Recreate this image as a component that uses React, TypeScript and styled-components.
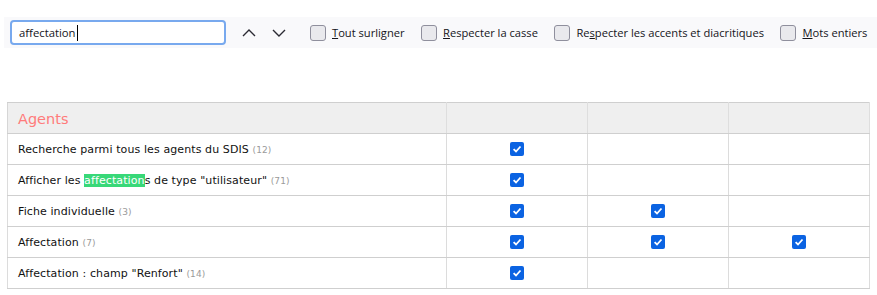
import React from 'react'
import styled, { createGlobalStyle } from 'styled-components'

const GlobalStyle = createGlobalStyle`
  html, body {
    margin: 0;
    padding: 0;
    background: #ffffff;
  }
`

const Page = styled.div`
  width: 877px;
  padding-top: 17px;
`

const FindBar = styled.div`
  display: flex;
  align-items: center;
  height: 31px;
  margin-left: 4px;
  padding-left: 6px;
  background: #f9f9fb;
  font-family: 'Open Sans', 'Noto Sans', sans-serif;
  font-size: 11.15px;
  color: #15141a;
  overflow: hidden;
`

const SearchField = styled.div`
  box-sizing: border-box;
  flex: 0 0 216px;
  height: 25px;
  border: 2px solid #78a9ee;
  border-radius: 4px;
  background: #fff;
  display: flex;
  align-items: center;
  padding-left: 7px;
  font-size: 11.3px;
  color: #15141a;
`

const Caret = styled.span`
  display: inline-block;
  width: 1px;
  height: 16px;
  background: #000;
  margin-left: 1px;
`

const NavButtons = styled.div`
  display: flex;
  flex-shrink: 0;
  margin-left: 8px;
  margin-right: 16px;
`

const NavButton = styled.div`
  width: 30px;
  height: 25px;
  display: flex;
  align-items: center;
  justify-content: center;
`

const Options = styled.div`
  display: flex;
  align-items: center;
  gap: 16.5px;
  flex-shrink: 0;
`

const Option = styled.label`
  display: flex;
  align-items: center;
  gap: 6px;
  white-space: nowrap;
`

const Box = styled.span`
  box-sizing: border-box;
  width: 16px;
  height: 16px;
  border: 1px solid #8f8f9d;
  border-radius: 3px;
  background: #e9e9ed;
`

const Key = styled.span`
  text-decoration: underline;
`

const Table = styled.table`
  margin: 54px 0 0 7px;
  border-collapse: collapse;
  width: 862px;
  table-layout: fixed;
  font-family: 'DejaVu Sans', Verdana, sans-serif;
  font-size: 11px;
  letter-spacing: 0.1px;
  color: #111;
`

const HeadCell = styled.td`
  height: 31px;
  padding: 2px 0 0 10px;
  box-sizing: border-box;
  background: #efefef;
  border-top: 1px solid #cfcfcf;
  border-bottom: 1px solid #cfcfcf;
  border-left: 1px solid #d6d6d6;
  border-right: 1px solid #dedede;
  font-size: 14.5px;
  letter-spacing: 0;
  color: #ff7b7b;
  vertical-align: middle;
`

const Cell = styled.td<{ $check?: boolean }>`
  height: 30px;
  padding: ${p => (p.$check ? '0' : '0 0 0 10px')};
  border-bottom: 1px solid #cfcfcf;
  border-left: 1px solid #dcdcdc;
  border-right: 1px solid #dcdcdc;
  text-align: ${p => (p.$check ? 'center' : 'left')};
  vertical-align: middle;
  white-space: nowrap;
`

const Count = styled.span`
  font-size: 9px;
  color: #9a9a9a;
`

const Mark = styled.span`
  background: #38d878;
  color: #fff;
`

const Tick = styled.span`
  display: inline-flex;
  align-items: center;
  justify-content: center;
  width: 14px;
  height: 14px;
  border-radius: 2px;
  background: #0b63e2;
  vertical-align: middle;
`

const Chevron = ({ up }: { up?: boolean }) => (
  <svg width="14" height="8" viewBox="0 0 14 8">
    <path
      d={up ? 'M1 7 L7 1 L13 7' : 'M1 1 L7 7 L13 1'}
      fill="none"
      stroke="#2b2a33"
      strokeWidth="1.4"
    />
  </svg>
)

const Checked = () => (
  <Tick>
    <svg width="10" height="10" viewBox="0 0 10 10">
      <path d="M1.6 5.2 L4 7.5 L8.5 2.5" fill="none" stroke="#fff" strokeWidth="1.8" />
    </svg>
  </Tick>
)

type Row = { label: React.ReactNode; count: number; cols: boolean[] }

const rows: Row[] = [
  { label: 'Recherche parmi tous les agents du SDIS', count: 12, cols: [true, false, false] },
  {
    label: (
      <>
        Afficher les <Mark>affectation</Mark>s de type "utilisateur"
      </>
    ),
    count: 71,
    cols: [true, false, false],
  },
  { label: 'Fiche individuelle', count: 3, cols: [true, true, false] },
  { label: 'Affectation', count: 7, cols: [true, true, true] },
  { label: 'Affectation : champ "Renfort"', count: 14, cols: [true, false, false] },
]

const App: React.FC = () => {
  return (
    <Page>
      <GlobalStyle />
      <FindBar>
        <SearchField>
          affectation
          <Caret />
        </SearchField>
        <NavButtons>
          <NavButton>
            <Chevron up />
          </NavButton>
          <NavButton>
            <Chevron />
          </NavButton>
        </NavButtons>
        <Options>
          <Option>
            <Box />
            <span>
              <Key>T</Key>out surligner
            </span>
          </Option>
          <Option>
            <Box />
            <span>
              <Key>R</Key>especter la casse
            </span>
          </Option>
          <Option>
            <Box />
            <span>
              Re<Key>s</Key>pecter les accents et diacritiques
            </span>
          </Option>
          <Option>
            <Box />
            <span>
              <Key>M</Key>ots entiers
            </span>
          </Option>
        </Options>
      </FindBar>

      <Table>
        <colgroup>
          <col style={{ width: 439 }} />
          <col style={{ width: 141 }} />
          <col style={{ width: 141 }} />
          <col style={{ width: 141 }} />
        </colgroup>
        <tbody>
          <tr>
            <HeadCell>Agents</HeadCell>
            <HeadCell />
            <HeadCell />
            <HeadCell />
          </tr>
          {rows.map((r, i) => (
            <tr key={i}>
              <Cell>
                {r.label} <Count>({r.count})</Count>
              </Cell>
              {r.cols.map((c, j) => (
                <Cell key={j} $check>
                  {c && <Checked />}
                </Cell>
              ))}
            </tr>
          ))}
        </tbody>
      </Table>
    </Page>
  )
}

export default App
